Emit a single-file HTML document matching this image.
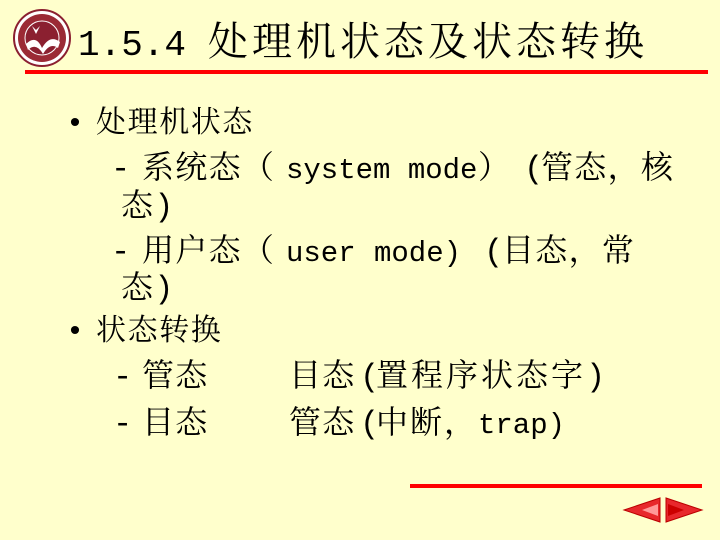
<!DOCTYPE html>
<html><head><meta charset="utf-8"><style>
html,body{margin:0;padding:0}
body{width:720px;height:540px;background:#FFFFCC;position:relative;overflow:hidden;font-family:"Liberation Mono","Noto Serif CJK SC",serif;color:#000}
.l{position:absolute;white-space:pre;line-height:1}
.t{font-size:40px;top:26px;letter-spacing:4px}
.tm{font-size:36px;top:28px;left:78px;letter-spacing:0}
.a{font-size:30px;letter-spacing:1.6px}
.b{font-size:32px;letter-spacing:1.3px}
.m{font-size:29px;letter-spacing:0}
</style></head><body>
<svg style="position:absolute;left:12px;top:8px" width="62" height="60" viewBox="0 0 62 60">
<circle cx="30" cy="30" r="28" fill="#fff" stroke="#8B2030" stroke-width="2"/>
<circle cx="30" cy="30" r="24" fill="#9B2A35"/>
<circle cx="30" cy="30" r="17" fill="#8B2030" stroke="#fff" stroke-width="1"/>
<path d="M14 36 Q24 26 30 40 Q38 26 48 34 L46 40 Q38 34 31 46 Q24 34 16 42Z" fill="#fff"/>
<path d="M20 18 L24 26 L28 18 L24 22Z" fill="#fff"/>
</svg>
<div class="l tm">1.5.4</div>
<div class="l t" style="left:208px">处理机状态及状态转换</div>
<div style="position:absolute;left:25px;top:70px;width:683px;height:4px;background:#f00"></div>

<div class="l a" style="left:66px;top:110px">•</div>
<div class="l a" style="left:96px;top:110px">处理机状态</div>

<div class="l b" style="left:111px;top:154px">-</div>
<div class="l b" style="left:142px;top:154px">系统态（</div>
<div class="l m" style="left:286px;top:156px">system mode</div>
<div class="l b" style="left:478px;top:154px">）</div>
<div class="l b" style="left:524px;top:154px">(</div>
<div class="l b" style="left:541px;top:154px">管态，核</div>

<div class="l b" style="left:121px;top:192px">态)</div>

<div class="l b" style="left:111px;top:237px">-</div>
<div class="l b" style="left:142px;top:237px">用户态（</div>
<div class="l m" style="left:286px;top:239px">user</div>
<div class="l m" style="left:374px;top:239px">mode)</div>
<div class="l b" style="left:484px;top:237px">(</div>
<div class="l b" style="left:502px;top:237px">目态，常</div>

<div class="l b" style="left:121px;top:274px">态)</div>

<div class="l a" style="left:66px;top:318px">•</div>
<div class="l a" style="left:96px;top:318px">状态转换</div>

<div class="l b" style="left:113px;top:362px">-</div>
<div class="l b" style="left:142px;top:362px">管态</div>
<div class="l b" style="left:289px;top:362px">目态</div>
<div class="l b" style="left:360px;top:362px">(</div>
<div class="l b" style="left:376px;top:362px;letter-spacing:3px">置程序状态字</div>
<div class="l b" style="left:586px;top:362px">)</div>

<div class="l b" style="left:113px;top:409px">-</div>
<div class="l b" style="left:142px;top:409px">目态</div>
<div class="l b" style="left:289px;top:409px">管态</div>
<div class="l b" style="left:360px;top:409px">(</div>
<div class="l b" style="left:376px;top:409px;letter-spacing:2px">中断</div>
<div class="l b" style="left:444px;top:409px">，</div>
<div class="l m" style="left:478px;top:411px">trap)</div>

<div style="position:absolute;left:410px;top:484px;width:292px;height:4px;background:#f00"></div>
<svg style="position:absolute;left:622px;top:496px" width="82" height="28" viewBox="0 0 82 28">
<path d="M2 14 L38 2 L38 26Z" fill="#e8282c" stroke="#b00" stroke-width="1"/>
<path d="M20 14 L36 8 L36 20Z" fill="#f99"/>
<path d="M80 14 L44 2 L44 26Z" fill="#e8282c" stroke="#b00" stroke-width="1"/>
<path d="M62 14 L46 8 L46 20Z" fill="#c00"/>
</svg>
</body></html>
